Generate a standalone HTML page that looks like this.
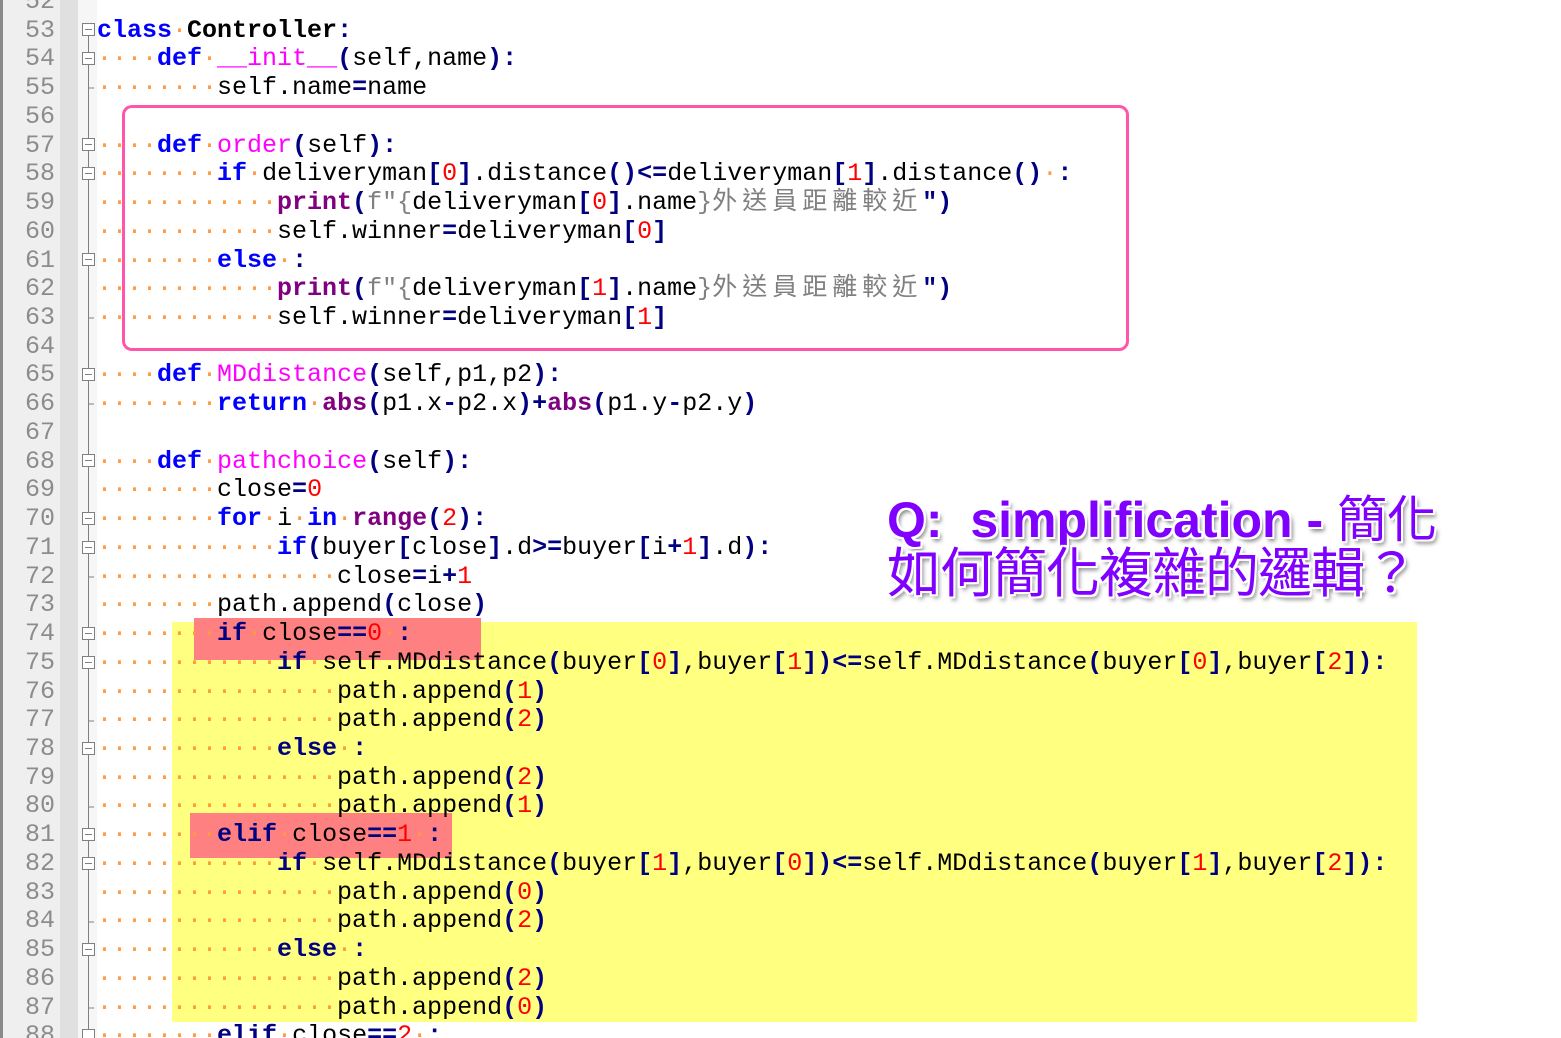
<!DOCTYPE html>
<html><head><meta charset="utf-8"><style>
html,body{margin:0;padding:0;width:1561px;height:1038px;overflow:hidden;background:#fff;position:relative}
.g1{position:absolute;left:0;top:0;width:3px;height:1038px;background:#8a8a8a}
.g2{position:absolute;left:3px;top:0;width:57px;height:1038px;background:#efefef}
.g3{position:absolute;left:60px;top:0;width:18px;height:1038px;background:#e0e0e0}
.g4{position:absolute;left:78px;top:0;width:19px;height:1038px;background:#f6f6f6}
.num{position:absolute;left:3px;top:-12.1px;width:52px;text-align:right;font:25px/28.74px "Liberation Mono",monospace;color:#8c8c8c;white-space:pre}
.code{position:absolute;left:97px;top:-12.1px;font:25px/28.74px "Liberation Mono","Noto Sans CJK TC",monospace;color:#000;white-space:pre;z-index:3}
.yel{position:absolute;left:172px;top:622px;width:1245px;height:400px;background:#ffff80;z-index:1}
.red1{position:absolute;left:194px;top:618px;width:287px;height:42px;background:#ff8080;z-index:2}
.red2{position:absolute;left:190px;top:813px;width:262px;height:45px;background:#ff8080;z-index:2}
.pink{position:absolute;left:122px;top:105px;width:1001px;height:240px;border:3px solid #ff55aa;border-radius:10px;z-index:4}
.k{color:#0000ff;font-weight:bold}
.n{color:#000080;font-weight:bold}
.f{color:#ff00ff}
.r{color:#ff0000}
.p{color:#800080;font-weight:bold}
.s{color:#808080}
.d{color:#ff9a40}
.c{letter-spacing:5px;color:#808080}
.b{font-weight:bold}
svg.fold{position:absolute;left:78px;top:0;z-index:3}
.q{position:absolute;left:887px;z-index:6;color:#8000ff;font-weight:bold;white-space:pre;
 text-shadow:-2px -2px 0 #fff,2px -2px 0 #fff,-2px 2px 0 #fff,2px 2px 0 #fff,0 2px 0 #fff,0 -2px 0 #fff,2px 0 0 #fff,-2px 0 0 #fff,3px 4px 4px rgba(0,0,0,.5)}
</style></head><body>
<div class="g1"></div><div class="g2"></div><div class="g3"></div><div class="g4"></div>
<div class="num">52
53
54
55
56
57
58
59
60
61
62
63
64
65
66
67
68
69
70
71
72
73
74
75
76
77
78
79
80
81
82
83
84
85
86
87
88</div>
<svg class="fold" width="19" height="1038">
<line x1="10.5" y1="36" x2="10.5" y2="1038" stroke="#808080" stroke-width="1"/>
<g fill="#fff" stroke="#808080" stroke-width="1">
<rect x="4.5" y="23.5" width="12" height="12"/><rect x="4.5" y="52.5" width="12" height="12"/>
<rect x="4.5" y="138.5" width="12" height="12"/><rect x="4.5" y="167.5" width="12" height="12"/>
<rect x="4.5" y="253.5" width="12" height="12"/><rect x="4.5" y="368.5" width="12" height="12"/>
<rect x="4.5" y="454.5" width="12" height="12"/><rect x="4.5" y="512.5" width="12" height="12"/>
<rect x="4.5" y="541.5" width="12" height="12"/><rect x="4.5" y="627.5" width="12" height="12"/>
<rect x="4.5" y="656.5" width="12" height="12"/><rect x="4.5" y="742.5" width="12" height="12"/>
<rect x="4.5" y="828.5" width="12" height="12"/><rect x="4.5" y="857.5" width="12" height="12"/>
<rect x="4.5" y="943.5" width="12" height="12"/><rect x="4.5" y="1029.5" width="12" height="12"/>
</g>
<g stroke="#808080"><line x1="7" y1="29.5" x2="14" y2="29.5"/><line x1="7" y1="58.5" x2="14" y2="58.5"/><line x1="7" y1="144.5" x2="14" y2="144.5"/><line x1="7" y1="173.5" x2="14" y2="173.5"/><line x1="7" y1="259.5" x2="14" y2="259.5"/><line x1="7" y1="374.5" x2="14" y2="374.5"/><line x1="7" y1="460.5" x2="14" y2="460.5"/><line x1="7" y1="518.5" x2="14" y2="518.5"/><line x1="7" y1="547.5" x2="14" y2="547.5"/><line x1="7" y1="633.5" x2="14" y2="633.5"/><line x1="7" y1="662.5" x2="14" y2="662.5"/><line x1="7" y1="748.5" x2="14" y2="748.5"/><line x1="7" y1="834.5" x2="14" y2="834.5"/><line x1="7" y1="863.5" x2="14" y2="863.5"/><line x1="7" y1="949.5" x2="14" y2="949.5"/>
<line x1="10" y1="88" x2="16" y2="88"/><line x1="10" y1="318" x2="16" y2="318"/><line x1="10" y1="404" x2="16" y2="404"/><line x1="10" y1="577" x2="16" y2="577"/><line x1="10" y1="721" x2="16" y2="721"/><line x1="10" y1="807" x2="16" y2="807"/><line x1="10" y1="922" x2="16" y2="922"/><line x1="10" y1="1008" x2="16" y2="1008"/></g>
</svg>
<div class="yel"></div><div class="red1"></div><div class="red2"></div>
<div class="pink"></div>
<div class="code">
<span class="k">class</span><span class="d">·</span><span class="b">Controller</span><span class="n">:</span>
<span class="d">····</span><span class="k">def</span><span class="d">·</span><span class="f">__init__</span><span class="n">(</span>self,name<span class="n">):</span>
<span class="d">········</span>self.name<span class="n">=</span>name

<span class="d">····</span><span class="k">def</span><span class="d">·</span><span class="f">order</span><span class="n">(</span>self<span class="n">):</span>
<span class="d">········</span><span class="k">if</span><span class="d">·</span>deliveryman<span class="n">[</span><span class="r">0</span><span class="n">]</span>.distance<span class="n">()&lt;=</span>deliveryman<span class="n">[</span><span class="r">1</span><span class="n">]</span>.distance<span class="n">()</span><span class="d">·</span><span class="n">:</span>
<span class="d">············</span><span class="p">print</span><span class="n">(</span><span class="s">f"{</span>deliveryman<span class="n">[</span><span class="r">0</span><span class="n">]</span>.name<span class="s">}</span><span class="c">外送員距離較近</span><span class="n">")</span>
<span class="d">············</span>self.winner<span class="n">=</span>deliveryman<span class="n">[</span><span class="r">0</span><span class="n">]</span>
<span class="d">········</span><span class="k">else</span><span class="d">·</span><span class="n">:</span>
<span class="d">············</span><span class="p">print</span><span class="n">(</span><span class="s">f"{</span>deliveryman<span class="n">[</span><span class="r">1</span><span class="n">]</span>.name<span class="s">}</span><span class="c">外送員距離較近</span><span class="n">")</span>
<span class="d">············</span>self.winner<span class="n">=</span>deliveryman<span class="n">[</span><span class="r">1</span><span class="n">]</span>

<span class="d">····</span><span class="k">def</span><span class="d">·</span><span class="f">MDdistance</span><span class="n">(</span>self,p1,p2<span class="n">):</span>
<span class="d">········</span><span class="k">return</span><span class="d">·</span><span class="p">abs</span><span class="n">(</span>p1.x<span class="n">-</span>p2.x<span class="n">)+</span><span class="p">abs</span><span class="n">(</span>p1.y<span class="n">-</span>p2.y<span class="n">)</span>

<span class="d">····</span><span class="k">def</span><span class="d">·</span><span class="f">pathchoice</span><span class="n">(</span>self<span class="n">):</span>
<span class="d">········</span>close<span class="n">=</span><span class="r">0</span>
<span class="d">········</span><span class="k">for</span><span class="d">·</span>i<span class="d">·</span><span class="k">in</span><span class="d">·</span><span class="p">range</span><span class="n">(</span><span class="r">2</span><span class="n">):</span>
<span class="d">············</span><span class="k">if</span><span class="n">(</span>buyer<span class="n">[</span>close<span class="n">]</span>.d<span class="n">&gt;=</span>buyer<span class="n">[</span>i<span class="n">+</span><span class="r">1</span><span class="n">]</span>.d<span class="n">):</span>
<span class="d">················</span>close<span class="n">=</span>i<span class="n">+</span><span class="r">1</span>
<span class="d">········</span>path.append<span class="n">(</span>close<span class="n">)</span>
<span class="d">········</span><span class="n">if</span><span class="d">·</span>close<span class="n">==</span><span class="r">0</span><span class="d">·</span><span class="n">:</span>
<span class="d">············</span><span class="n">if</span><span class="d">·</span>self.MDdistance<span class="n">(</span>buyer<span class="n">[</span><span class="r">0</span><span class="n">]</span>,buyer<span class="n">[</span><span class="r">1</span><span class="n">])&lt;=</span>self.MDdistance<span class="n">(</span>buyer<span class="n">[</span><span class="r">0</span><span class="n">]</span>,buyer<span class="n">[</span><span class="r">2</span><span class="n">]):</span>
<span class="d">················</span>path.append<span class="n">(</span><span class="r">1</span><span class="n">)</span>
<span class="d">················</span>path.append<span class="n">(</span><span class="r">2</span><span class="n">)</span>
<span class="d">············</span><span class="n">else</span><span class="d">·</span><span class="n">:</span>
<span class="d">················</span>path.append<span class="n">(</span><span class="r">2</span><span class="n">)</span>
<span class="d">················</span>path.append<span class="n">(</span><span class="r">1</span><span class="n">)</span>
<span class="d">········</span><span class="n">elif</span><span class="d">·</span>close<span class="n">==</span><span class="r">1</span><span class="d">·</span><span class="n">:</span>
<span class="d">············</span><span class="n">if</span><span class="d">·</span>self.MDdistance<span class="n">(</span>buyer<span class="n">[</span><span class="r">1</span><span class="n">]</span>,buyer<span class="n">[</span><span class="r">0</span><span class="n">])&lt;=</span>self.MDdistance<span class="n">(</span>buyer<span class="n">[</span><span class="r">1</span><span class="n">]</span>,buyer<span class="n">[</span><span class="r">2</span><span class="n">]):</span>
<span class="d">················</span>path.append<span class="n">(</span><span class="r">0</span><span class="n">)</span>
<span class="d">················</span>path.append<span class="n">(</span><span class="r">2</span><span class="n">)</span>
<span class="d">············</span><span class="n">else</span><span class="d">·</span><span class="n">:</span>
<span class="d">················</span>path.append<span class="n">(</span><span class="r">2</span><span class="n">)</span>
<span class="d">················</span>path.append<span class="n">(</span><span class="r">0</span><span class="n">)</span>
<span class="d">········</span><span class="n">elif</span><span class="d">·</span>close<span class="n">==</span><span class="r">2</span><span class="d">·</span><span class="n">:</span></div>
<div class="q" style="top:490px;font:bold 50px/60px 'Liberation Sans','Noto Sans CJK TC',sans-serif;">Q:  simplification - <span style="font-weight:400">簡化</span></div>
<div class="q" style="top:544px;font:400 54px/60px 'Liberation Sans','Noto Sans CJK TC',sans-serif;letter-spacing:-1px">如何簡化複雜的邏輯？</div>
</body></html>
